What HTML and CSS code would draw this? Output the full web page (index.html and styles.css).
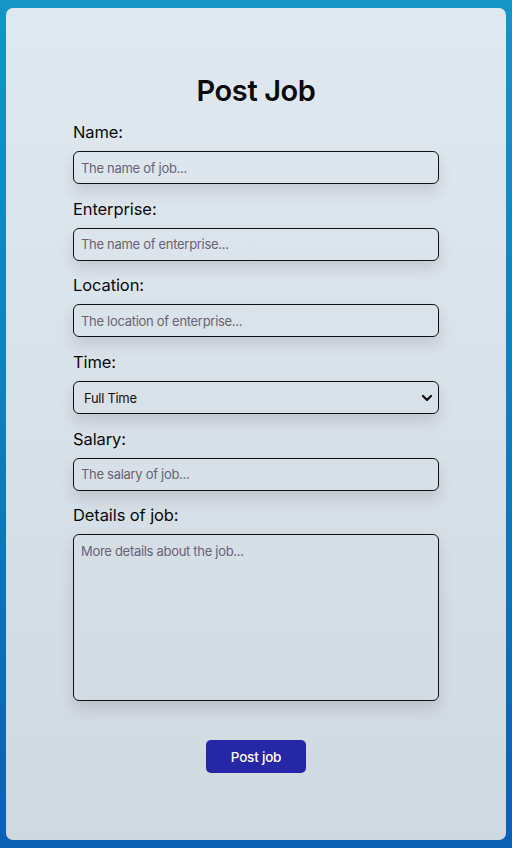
FILE: index.html
```html
<!DOCTYPE html>
<html>
<head>
<meta charset="utf-8">
<link rel="stylesheet" href="styles.css">
</head>
<body>
<div class="page">
  <form class="card">
    <h1 class="title">Post Job</h1>
    <div class="field">
      <label class="label">Name:</label>
      <input class="input" type="text" placeholder="The name of job...">
    </div>
    <div class="field">
      <label class="label">Enterprise:</label>
      <input class="input" type="text" placeholder="The name of enterprise...">
    </div>
    <div class="field">
      <label class="label">Location:</label>
      <input class="input" type="text" placeholder="The location of enterprise...">
    </div>
    <div class="field">
      <label class="label">Time:</label>
      <div class="select-wrap">
        <select class="input select">
          <option>Full Time</option>
          <option>Part Time</option>
        </select>
        <svg class="chev" width="12" height="8" viewBox="0 0 12 8"><path d="M2 2 L6 6 L10 2" fill="none" stroke="#111" stroke-width="2.2" stroke-linecap="round" stroke-linejoin="round"/></svg>
      </div>
    </div>
    <div class="field">
      <label class="label">Salary:</label>
      <input class="input" type="text" placeholder="The salary of job...">
    </div>
    <div class="field">
      <label class="label">Details of job:</label>
      <textarea class="input textarea" placeholder="More details about the job..."></textarea>
    </div>
    <div class="actions">
      <button class="btn" type="button">Post job</button>
    </div>
  </form>
</div>
</body>
</html>
```
FILE: styles.css
```css
html, body {
  margin: 0;
  padding: 0;
}
body {
  width: 512px;
  height: 848px;
  background: linear-gradient(180deg, #1595c6 0%, #0f7dbf 50%, #0c60b4 100%);
  font-family: Inter, "Noto Sans", sans-serif;
}
.page {
  padding: 8px 6px;
  box-sizing: border-box;
  height: 848px;
}
.card {
  width: 500px;
  height: 832px;
  box-sizing: border-box;
  border-radius: 7px;
  background: linear-gradient(180deg, #e1e9f0 0%, #d0d8e0 100%);
  display: flex;
  flex-direction: column;
  align-items: center;
  padding-top: 64px;
}
.title {
  margin: 0 0 12px 0;
  font-size: 29px;
  font-weight: 600;
  color: #0a0a0a;
  letter-spacing: -0.4px;
  line-height: 38px;
}
.field {
  width: 366px;
  display: flex;
  flex-direction: column;
  margin-bottom: 14.7px;
}
.label {
  font-size: 16.5px;
  font-weight: 400;
  color: #0a0a0a;
  line-height: 20px;
  margin-bottom: 9px;
  letter-spacing: -0.1px;
}
.input {
  box-sizing: border-box;
  width: 366px;
  height: 33px;
  border: 1px solid #111;
  border-radius: 6px;
  background: transparent;
  box-shadow: 0 8px 14px rgba(40, 50, 70, 0.14);
  font-family: Inter, "Noto Sans", sans-serif;
  font-size: 13px;
  letter-spacing: -0.3px;
  padding: 0 7px;
  color: #111;
  outline: none;
}
.input::placeholder {
  color: #6a6276;
}
.select-wrap {
  position: relative;
}
.select {
  appearance: none;
  -webkit-appearance: none;
  padding-left: 10px;
}
.chev {
  position: absolute;
  right: 6px;
  top: 13px;
}
.textarea {
  height: 167px;
  resize: none;
  padding: 7px 7px;
  line-height: 18px;
}
.actions {
  margin-top: 24px;
  display: flex;
  justify-content: center;
}
.btn {
  width: 100px;
  height: 33px;
  border: none;
  border-radius: 5px;
  background: #2627a6;
  color: #fff;
  font-family: Inter, "Noto Sans", sans-serif;
  font-size: 13.5px;
  font-weight: 500;
  letter-spacing: -0.2px;
}
```
